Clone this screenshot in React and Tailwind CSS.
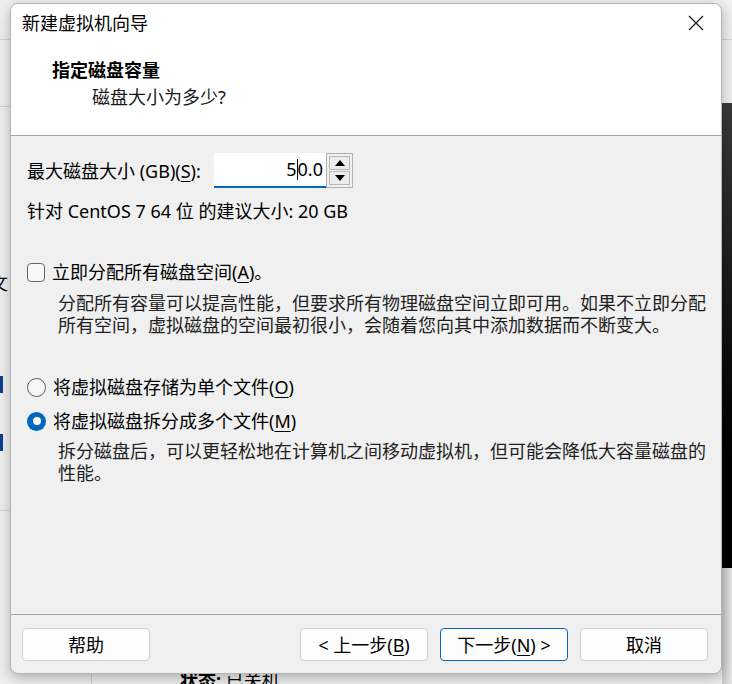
import React from 'react'

const font = "font-['Noto_Sans','Noto_Sans_CJK_SC',sans-serif]"

function U({ children }) {
  return <span className="underline underline-offset-[3px] decoration-1">{children}</span>
}

function Btn({ children, primary }) {
  return (
    <button
      className={
        'w-[128px] h-[33px] rounded-[4px] bg-[#fdfdfd] text-[18px] leading-[24px] text-black flex items-center justify-center border ' +
        (primary ? 'border-[#0067c0]' : 'border-[#d0d0d0]')
      }
    >
      {children}
    </button>
  )
}

function Radio({ checked }) {
  if (checked) {
    return (
      <span className="w-[19px] h-[19px] rounded-full bg-[#0067c0] flex items-center justify-center shrink-0">
        <span className="w-[8px] h-[8px] rounded-full bg-white" />
      </span>
    )
  }
  return <span className="w-[19px] h-[19px] rounded-full border border-[#5c5c5c] bg-[#f6f6f6] shrink-0" />
}

export default function App() {
  return (
    <div className={'relative w-[732px] h-[684px] overflow-hidden bg-[#f0f0f0] ' + font}>
      {/* window behind the dialog */}
      <div className="absolute left-0 top-[39px] w-full h-px bg-[#d4d4d4]" />
      <div className="absolute left-0 top-[106px] w-[10px] h-px bg-[#d4d4d4]" />
      <div className="absolute left-0 top-[510px] w-[10px] h-px bg-[#d4d4d4]" />
      <div className="absolute left-[-10px] top-[271px] text-[18px] leading-[24px] text-black">文</div>
      <div className="absolute left-0 top-[376px] w-[3px] h-[17px] bg-[#0a3d91]" />
      <div className="absolute left-0 top-[434px] w-[3px] h-[17px] bg-[#0a3d91]" />
      <div className="absolute left-[722px] top-[103px] w-[10px] h-[465px] bg-gradient-to-b from-[#3a3a3a] via-[#111] to-black" />
      <div className="absolute left-[722px] top-[568px] w-[10px] h-[116px] bg-gradient-to-r from-[#c8c8c8] to-[#e6e6e6]" />
      <div className="absolute left-[91px] top-[660px] w-px h-[24px] bg-[#d0d0d0]" />
      <div className="absolute left-[180px] top-[668px] text-[18px] leading-[24px] text-black">
        <span className="font-bold">状态:</span> 已关机
      </div>

      {/* dialog */}
      <div className="absolute left-[10px] top-[3px] w-[712px] h-[671px] flex flex-col rounded-[8px] border border-[#b4b4b4] bg-[#f0f0f0] overflow-hidden shadow-[0_4px_14px_rgba(0,0,0,0.28)]">
        <div className="h-[132px] bg-white border-b border-[#a5a5a5] shrink-0">
          <div className="mt-[7px] h-[24px] pl-[11px] pr-[17px] flex items-center justify-between">
            <span className="text-[18px] leading-[24px] text-black">新建虚拟机向导</span>
            <svg width="16" height="16" viewBox="0 0 16 16">
              <path d="M1 1L15 15M15 1L1 15" stroke="#1a1a1a" strokeWidth="1.3" fill="none" />
            </svg>
          </div>
          <div className="mt-[23px] pl-[41px] text-[18px] leading-[24px] font-bold text-black">指定磁盘容量</div>
          <div className="mt-[3px] pl-[81px] text-[18px] leading-[24px] text-[#1a1a1a]">磁盘大小为多少?</div>
        </div>

        <div className="flex-1 pl-[16px] pr-[10px]">
          <div className="mt-[17px] h-[35px] flex items-center">
            <span className="w-[187px] text-[18px] leading-[24px] text-black whitespace-nowrap">
              最大磁盘大小 (GB)(<U>S</U>):
            </span>
            <div className="w-[112px] h-[35px] bg-white border-b-2 border-[#0067c0] flex items-center justify-end pr-[3px] text-[18px] text-black">
              <span>5</span>
              <span className="w-px h-[21px] bg-black" />
              <span>0.0</span>
            </div>
            <div className="w-[27px] h-[35px] border border-[#b0b0b0] bg-[#f0f0f0] p-[2px] flex flex-col gap-[1px]">
              <div className="flex-1 border border-[#b8b8b8] bg-[#ececec] flex items-center justify-center">
                <svg width="10" height="6" viewBox="0 0 10 6"><path d="M5 0L10 6H0Z" fill="#000" /></svg>
              </div>
              <div className="flex-1 border border-[#b8b8b8] bg-[#ececec] flex items-center justify-center">
                <svg width="10" height="6" viewBox="0 0 10 6"><path d="M0 0H10L5 6Z" fill="#000" /></svg>
              </div>
            </div>
          </div>

          <div className="mt-[11px] text-[18px] leading-[24px] text-black">针对 CentOS 7 64 位 的建议大小: 20 GB</div>

          <div className="mt-[37px] h-[24px] flex items-center gap-[7px]">
            <span className="w-[18px] h-[19px] rounded-[4px] border border-[#666] bg-[#f7f7f7] shrink-0" />
            <span className="text-[18px] leading-[24px] text-black">立即分配所有磁盘空间(<U>A</U>)。</span>
          </div>
          <div className="mt-[8px] ml-[31px] text-[18px] leading-[22px] text-[#222] whitespace-nowrap">
            <div>分配所有容量可以提高性能，但要求所有物理磁盘空间立即可用。如果不立即分配</div>
            <div>所有空间，虚拟磁盘的空间最初很小，会随着您向其中添加数据而不断变大。</div>
          </div>

          <div className="mt-[39px] h-[24px] flex items-center gap-[7px]">
            <Radio />
            <span className="text-[18px] leading-[24px] text-black">将虚拟磁盘存储为单个文件(<U>O</U>)</span>
          </div>
          <div className="mt-[10px] h-[24px] flex items-center gap-[7px]">
            <Radio checked />
            <span className="text-[18px] leading-[24px] text-black">将虚拟磁盘拆分成多个文件(<U>M</U>)</span>
          </div>
          <div className="mt-[7px] ml-[31px] text-[18px] leading-[22px] text-[#222] whitespace-nowrap">
            <div>拆分磁盘后，可以更轻松地在计算机之间移动虚拟机，但可能会降低大容量磁盘的</div>
            <div>性能。</div>
          </div>
        </div>

        <div className="h-[59px] shrink-0 border-t border-[#a5a5a5] pt-[13px] pl-[11px] pr-[13px] flex items-start justify-between">
          <Btn>帮助</Btn>
          <div className="flex gap-[12px]">
            <Btn>&lt; 上一步(<U>B</U>)</Btn>
            <Btn primary>下一步(<U>N</U>) &gt;</Btn>
            <Btn>取消</Btn>
          </div>
        </div>
      </div>
    </div>
  )
}
